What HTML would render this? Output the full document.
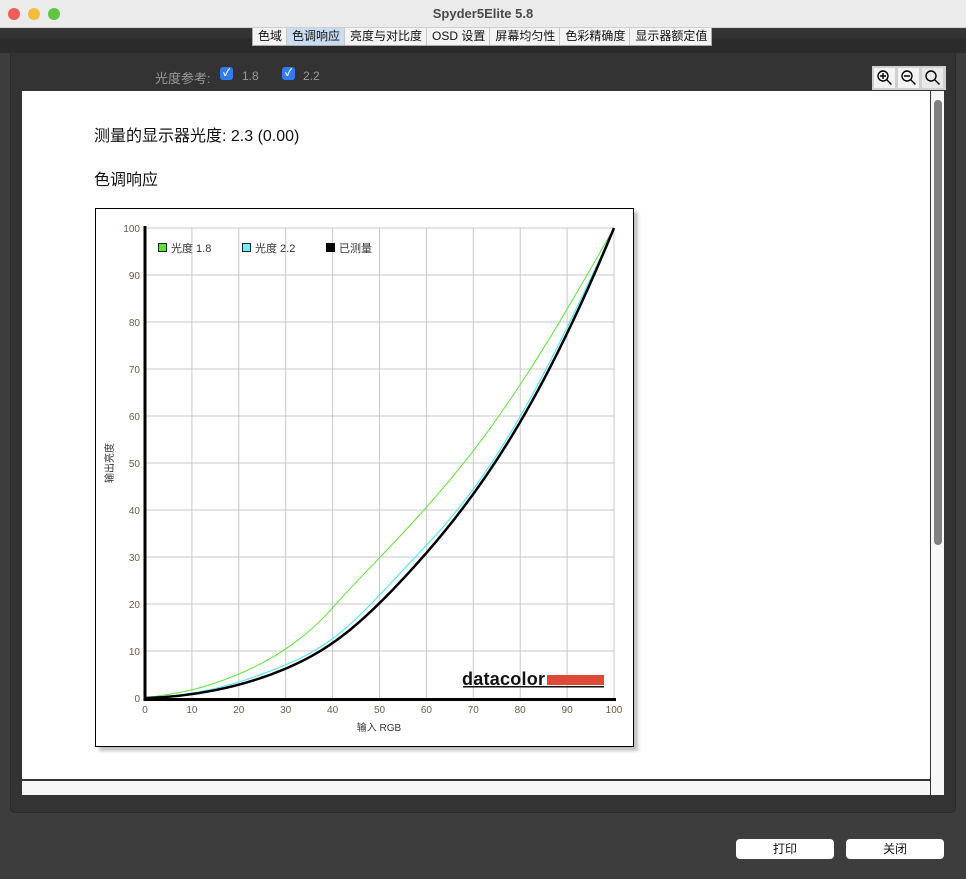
<!DOCTYPE html>
<html><head><meta charset="utf-8"><style>
*{margin:0;padding:0;box-sizing:border-box}
body{width:966px;height:879px;background:#3d3d3d;font-family:"Liberation Sans","Noto Sans CJK SC",sans-serif;position:relative;overflow:hidden}
.abs{position:absolute}
.title{left:0;top:0;width:966px;height:28px;background:#ebebeb;border-bottom:1px solid #cfcfcf;text-align:center;font-size:13px;font-weight:bold;color:#4a4a4a;line-height:28px}
.dot{width:12px;height:12px;border-radius:50%;top:8px}
.tabs{left:252px;top:28px;height:18px;display:flex;background:#f4f4f4;border:1px solid #aaa;border-top:none;font-size:12px;color:#111}
.tabs div{padding:0 4px 0 5px;border-right:1px solid #c8c8c8;line-height:17px}
.tabs .sel{background:#c9dcf2}
.btn{top:839px;width:98px;height:20px;background:#fff;border-radius:4px;font-size:12px;text-align:center;line-height:20px;color:#111}
.cb{width:13px;height:13px;background:#2f7cf6;border-radius:3px;color:#fff;font-size:10px;line-height:13px;text-align:center;font-weight:bold}
</style></head><body>
<div class="abs title">Spyder5Elite 5.8</div>
<div class="abs dot" style="left:8px;background:#ee5e56"></div>
<div class="abs dot" style="left:28px;background:#f4bd3a"></div>
<div class="abs dot" style="left:48px;background:#5fc543"></div>
<div class="abs" style="left:0;top:29px;width:966px;height:24px;background:#333"></div>
<div class="abs" style="left:0;top:38px;width:966px;height:15px;background:#2b2b2b"></div>
<div class="abs" style="left:10px;top:53px;width:946px;height:760px;background:#333;border:1px solid #2a2a2a;border-top:none;border-radius:0 0 5px 5px"></div>
<div class="abs tabs"><div>色域</div><div class="sel">色调响应</div><div>亮度与对比度</div><div>OSD 设置</div><div>屏幕均匀性</div><div>色彩精确度</div><div style="border:none">显示器额定值</div></div>
<div class="abs" style="left:155px;top:68px;font-size:13px;color:#9a9a9a">光度参考:</div>
<div class="abs cb" style="left:220px;top:67px">✓</div>
<div class="abs" style="left:242px;top:69px;font-size:12px;color:#9a9a9a">1.8</div>
<div class="abs cb" style="left:282px;top:67px">✓</div>
<div class="abs" style="left:303px;top:69px;font-size:12px;color:#9a9a9a">2.2</div>
<div class="abs" style="left:872px;top:66px;width:74px;height:24px;background:#d0d0d0"></div>
<svg class="abs" style="left:872px;top:66px" width="74" height="24">
<rect x="2" y="2" width="21" height="20" fill="#f4f4f4"/><rect x="26" y="2" width="21" height="20" fill="#f4f4f4"/><rect x="50" y="2" width="21" height="20" fill="#e8e8e8"/>
<g fill="none" stroke="#000" stroke-width="1.4"><circle cx="11" cy="10" r="5"/><path d="M14.5 13.5l5 5M8 10h6M11 7v6"/><circle cx="35" cy="10" r="5"/><path d="M38.5 13.5l5 5M32 10h6"/><circle cx="59" cy="10" r="5"/><path d="M62.5 13.5l5 5"/></g></svg>
<div class="abs" style="left:22px;top:91px;width:908px;height:689px;background:#fff;border-bottom:1px solid #333"></div>
<div class="abs" style="left:930px;top:91px;width:14px;height:704px;background:#f7f7f7;border-left:1px solid #333"></div>
<div class="abs" style="left:934px;top:100px;width:8px;height:445px;background:#808080;border-radius:4px"></div>
<div class="abs" style="left:22px;top:781px;width:908px;height:14px;background:#f7f7f7"></div>
<div class="abs" style="left:94px;top:122px;font-size:16px;color:#111">测量的显示器光度: 2.3 (0.00)</div>
<div class="abs" style="left:94px;top:166px;font-size:16px;color:#111">色调响应</div>
<svg class="abs" style="left:95px;top:208px" width="546" height="546">
<defs><filter id="b"><feGaussianBlur stdDeviation="1.5"/></filter></defs>
<rect x="4" y="4" width="539" height="539" fill="#999" opacity=".6" filter="url(#b)"/>
<rect x="0.5" y="0.5" width="538" height="538" fill="#fff" stroke="#000"/>
<g transform="translate(-95,-208)">
<g stroke="#c8c8c8" stroke-width="1">
<path d="M191.9 228V698M238.8 228V698M285.7 228V698M332.6 228V698M379.5 228V698M426.4 228V698M473.3 228V698M520.2 228V698M567.1 228V698M614 228V698"/>
<path d="M145 651H614M145 604H614M145 557H614M145 510H614M145 463H614M145 416H614M145 369H614M145 322H614M145 275H614M145 228H614"/>
</g>
<g fill="none" stroke-linejoin="round">
<path stroke="#5fe03a" stroke-width="1" d="M145,698 C170,694 190,692 215,683 C260,668 300,645 332.6,607.8 S420,520 473.3,450.8 S570,305 614,228"/>
<path stroke="#5ee6f0" stroke-width="1.2" d="M145,698 C190,696 230,688 285.7,664.8 S360,615 426.4,545.3 S540,390 614,228"/>
<path stroke="#000" stroke-width="2.5" d="M145,698 C190,697 240,688 285.7,668.6 S365,623 426.4,552.9 S545,395 614,228"/>
</g>
<path d="M145 226V699.5H616" stroke="#000" stroke-width="3" fill="none"/>
<g font-size="10" fill="#6b5a45" font-family="Liberation Sans,sans-serif" text-anchor="end">
<text x="140" y="702">0</text><text x="140" y="655">10</text><text x="140" y="608">20</text><text x="140" y="561">30</text><text x="140" y="514">40</text><text x="140" y="467">50</text><text x="140" y="420">60</text><text x="140" y="373">70</text><text x="140" y="326">80</text><text x="140" y="279">90</text><text x="140" y="232">100</text>
</g>
<g font-size="10" fill="#6b5a45" font-family="Liberation Sans,sans-serif" text-anchor="middle">
<text x="145" y="713">0</text><text x="191.9" y="713">10</text><text x="238.8" y="713">20</text><text x="285.7" y="713">30</text><text x="332.6" y="713">40</text><text x="379.5" y="713">50</text><text x="426.4" y="713">60</text><text x="473.3" y="713">70</text><text x="520.2" y="713">80</text><text x="567.1" y="713">90</text><text x="614" y="713">100</text>
<text x="379" y="731" fill="#333" font-family="Liberation Sans,Noto Sans CJK SC,sans-serif">输入 RGB</text>
<text transform="translate(113,463) rotate(-90)" fill="#333" font-family="Liberation Sans,Noto Sans CJK SC,sans-serif">输出亮度</text>
</g>
<rect x="158.5" y="243.5" width="8" height="8" fill="#5fe03a" stroke="#222"/>
<rect x="242.5" y="243.5" width="8" height="8" fill="#6ef0f8" stroke="#222"/>
<rect x="326" y="243" width="9" height="9" fill="#000"/>
<g font-size="11" fill="#333" font-family="Liberation Sans,Noto Sans CJK SC,sans-serif">
<text x="171" y="252">光度 1.8</text><text x="255" y="252">光度 2.2</text><text x="339" y="252">已测量</text></g>
<text x="462" y="685" font-size="18" font-weight="bold" fill="#111" font-family="Liberation Sans,sans-serif" textLength="83">datacolor</text>
<rect x="547" y="675" width="57" height="10" fill="#de4a38"/>
<rect x="463" y="686" width="141" height="1.5" fill="#111"/>
</g></svg>
<div class="abs btn" style="left:736px">打印</div>
<div class="abs btn" style="left:846px">关闭</div>
</body></html>
